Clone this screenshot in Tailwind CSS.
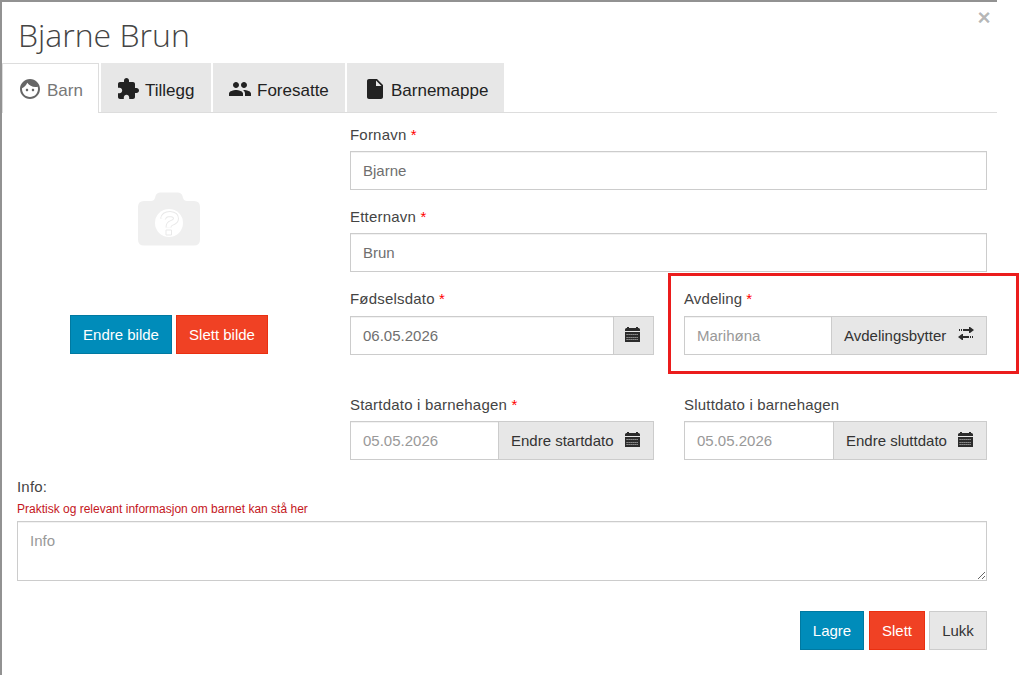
<!DOCTYPE html>
<html lang="no">
<head>
  <meta charset="UTF-8" />
  <meta name="viewport" content="width=device-width, initial-scale=1.0"/>
  <title>Bjarne Brun</title>
  <script src="https://cdn.jsdelivr.net/npm/@tailwindcss/browser@4"></script>
</head>
<body class="bg-white overflow-hidden font-['Liberation_Sans',Arial,sans-serif] text-[15px] leading-[21px] text-[#444]">

  <!-- Shared icons -->
  <svg class="hidden">
    <symbol id="calendar" viewBox="0 0 15 16">
      <path fill="#2b2b2b" d="M0 2.500Q0 1 1.500 1H2V0h2v1h7V0h2v1h.5Q15 1 15 2.500V4H0zM0 5h15v10H0z"/>
      <path stroke="#b5b5b5" stroke-width="1" stroke-dasharray="1.200 .8" d="M1.500 7.500h12M1.500 10.500h12M1.500 12.500h12"/>
    </symbol>
  </svg>

  <div class="relative w-[1019px] h-[675px] border-l-2 border-[#929292]">

    <!-- Header -->
    <header class="flex justify-between w-[995px] h-[63px] border-t-2 border-[#929292] pl-4 pr-1.5">
      <h1 class="font-['Open_Sans'] font-light text-[32px] leading-[44px] pt-[11px] text-[#444]">Bjarne Brun</h1>
      <button class="self-start w-[14px] mt-[5px] text-[22.5px] leading-[22px] font-bold text-black/30">×</button>
    </header>

    <!-- Tabs -->
    <nav class="flex gap-0.5 w-[995px] h-[50px] border-b border-[#ddd] text-[17px] leading-[24px] text-[#222]">
      <button class="flex items-center w-[97px] h-[50px] pl-[15px] pt-1 bg-white border border-b-0 border-[#ddd] text-[#777]">
        <svg class="size-6 -mt-1 shrink-0" viewBox="0 0 24 24" fill="#666"><path d="M9 11.750c-.69 0-1.250.56-1.250 1.250s.56 1.250 1.250 1.250 1.250-.56 1.250-1.250-.56-1.250-1.250-1.250zm6 0c-.69 0-1.250.56-1.250 1.250s.56 1.250 1.250 1.250 1.250-.56 1.250-1.250-.56-1.250-1.250-1.250zM12 2C6.480 2 2 6.480 2 12s4.480 10 10 10 10-4.480 10-10S17.520 2 12 2zm0 18c-4.410 0-8-3.590-8-8 0-.29.020-.58.050-.86 2.360-1.050 4.230-2.980 5.210-5.370C11.070 8.330 14.050 10 17.420 10c.78 0 1.530-.09 2.250-.26.21.71.33 1.470.33 2.260 0 4.410-3.590 8-8 8z"/></svg>
        <span class="ml-[5px]">Barn</span>
      </button>
      <button class="flex items-center w-[110px] h-[49px] pl-[15px] pt-1.5 bg-[#e7e7e7]">
        <svg class="size-6 -mt-1 shrink-0" viewBox="0 0 24 24" fill="#222"><path d="M20.500 11H19V7c0-1.100-.9-2-2-2h-4V3.500C13 2.120 11.880 1 10.500 1S8 2.120 8 3.500V5H4c-1.100 0-1.990.9-1.990 2v3.800H3.500c1.490 0 2.700 1.210 2.700 2.700s-1.210 2.700-2.700 2.700H2V20c0 1.100.9 2 2 2h3.800v-1.500c0-1.490 1.210-2.700 2.700-2.700 1.490 0 2.700 1.210 2.700 2.700V22H17c1.100 0 2-.9 2-2v-4h1.500c1.380 0 2.500-1.120 2.500-2.500S21.880 11 20.500 11z"/></svg>
        <span class="ml-[5px]">Tillegg</span>
      </button>
      <button class="flex items-center w-[132px] h-[49px] pl-[15px] pt-1.5 bg-[#e7e7e7]">
        <svg class="size-6 -mt-1 shrink-0" viewBox="0 0 24 24" fill="#222"><path d="M16 11c1.660 0 2.990-1.340 2.990-3S17.660 5 16 5c-1.660 0-3 1.340-3 3s1.340 3 3 3zm-8 0c1.660 0 2.990-1.340 2.990-3S9.660 5 8 5C6.340 5 5 6.340 5 8s1.340 3 3 3zm0 2c-2.330 0-7 1.170-7 3.500V19h14v-2.500c0-2.330-4.670-3.500-7-3.500zm8 0c-.29 0-.62.020-.97.050 1.160.84 1.970 1.970 1.970 3.450V19h6v-2.500c0-2.330-4.670-3.500-7-3.500z"/></svg>
        <span class="ml-[5px]">Foresatte</span>
      </button>
      <button class="flex items-center w-[157px] h-[49px] pl-4 pt-1.5 bg-[#e7e7e7]">
        <svg class="size-6 -mt-1 shrink-0" viewBox="0 0 24 24" fill="#222"><path d="M6 2c-1.100 0-1.990.9-1.990 2L4 20c0 1.100.89 2 1.990 2H18c1.100 0 2-.9 2-2V8l-6-6H6zm7 7V3.500L18.500 9H13z"/></svg>
        <span class="ml-1">Barnemappe</span>
      </button>
    </nav>

    <!-- Form -->
    <main class="flex w-[985px] h-[347px]">
      <!-- Picture -->
      <div class="w-[348px] pt-[78px]">
        <svg class="ml-[135px] w-[64px] h-[56px]" viewBox="0 0 64 56">
          <path fill="#efefef" d="M1 16Q1 10 7 10h7q3 0 4-3l.5-2q1-3.500 5-3.500h17q4 0 5 3.500l.5 2q1 3 4 3h7q6 0 6 6v32.500q0 6-6 6H7q-6 0-6-6z"/>
          <circle cx="32" cy="32" r="14" fill="#fff"/>
          <path fill="none" stroke="#e9e9e9" stroke-width="6" d="M26 28q1-5 7-5 6 .5 6 4.500 0 3-4.500 4.500-3 1-3 4.500"/>
          <path fill="none" stroke="#fff" stroke-width="4" d="M26 28q1-5 7-5 6 .5 6 4.500 0 3-4.500 4.500-3 1-3 4.500"/>
          <path fill="#fff" stroke="#e9e9e9" d="M29 39h5.500v5H29z"/>
        </svg>
        <div class="flex gap-1 mt-[68px] ml-[68px] text-white">
          <button class="w-[102px] h-[39px] bg-[#008cba] border border-[#0079a1]">Endre bilde</button>
          <button class="w-[92px] h-[39px] bg-[#f04124] border border-[#ea2f10]">Slett bilde</button>
        </div>
      </div>

      <!-- Fields -->
      <div class="w-[637px] pt-[11px]">
        <label class="block tracking-[0.2px]">Fornavn <span class="text-[#f00]">*</span></label>
        <div class="flex items-center mt-1.5 h-[39px] px-3 border border-[#ccc] text-[#6f6f6f] inset-shadow-2xs">Bjarne</div>
        <label class="block mt-4 tracking-[0.2px]">Etternavn <span class="text-[#f00]">*</span></label>
        <div class="flex items-center mt-1.5 h-[39px] px-3 border border-[#ccc] text-[#6f6f6f] inset-shadow-2xs">Brun</div>

        <div class="grid grid-cols-[304px_303px] gap-x-[30px] mt-4">
          <div>
            <label class="block tracking-[0.2px]">Fødselsdato <span class="text-[#f00]">*</span></label>
            <div class="flex mt-[7px] h-[39px] border border-[#ccc]">
              <div class="flex items-center flex-1 px-3 text-[#6f6f6f] inset-shadow-2xs">06.05.2026</div>
              <button class="w-[40px] pl-[11px] border-l border-[#ccc] bg-[#e7e7e7]"><svg class="w-[15px] h-4 -mt-0.5"><use href="#calendar"/></svg></button>
            </div>
          </div>
          <div>
            <label class="block tracking-[0.1px]">Avdeling <span class="text-[#f00]">*</span></label>
            <div class="flex mt-[7px] h-[39px] border border-[#ccc]">
              <div class="flex items-center flex-1 pl-3 text-[#999] inset-shadow-2xs">Marihøna</div>
              <button class="flex items-center justify-between w-[155px] pl-3 pr-3 border-l border-[#ccc] bg-[#e7e7e7] text-[#333]">Avdelingsbytter
                <svg class="w-4 h-[13px] -mt-1" viewBox="0 0 16 13" fill="#2b2b2b"><path d="M1 2h1v2H1zM3 2h1v2H3zM5 2h6V0h1l4 3-4 3h-1V4H5zM15 9h-1v2h1zM13 9h-1v2h1zM11 11H5v2H4L0 10l4-3h1v2h6z"/></svg>
              </button>
            </div>
          </div>
        </div>

        <div class="grid grid-cols-[304px_303px] gap-x-[30px] mt-[39px]">
          <div>
            <label class="block tracking-[0.2px]">Startdato i barnehagen <span class="text-[#f00]">*</span></label>
            <div class="flex mt-1.5 h-[39px] border border-[#ccc]">
              <div class="flex items-center flex-1 px-3 text-[#999] inset-shadow-2xs">05.05.2026</div>
              <button class="flex items-center justify-between w-[155px] pl-3 pr-[13px] border-l border-[#ccc] bg-[#e7e7e7] text-[#333]">Endre startdato <svg class="w-[15px] h-4 -mt-0.5"><use href="#calendar"/></svg></button>
            </div>
          </div>
          <div>
            <label class="block tracking-[0.2px]">Sluttdato i barnehagen</label>
            <div class="flex mt-1.5 h-[39px] border border-[#ccc]">
              <div class="flex items-center flex-1 pl-3 text-[#999] inset-shadow-2xs">05.05.2026</div>
              <button class="flex items-center justify-between w-[153px] pl-3 pr-[13px] border-l border-[#ccc] bg-[#e7e7e7] text-[#333]">Endre sluttdato <svg class="w-[15px] h-4 -mt-0.5"><use href="#calendar"/></svg></button>
            </div>
          </div>
        </div>
      </div>
    </main>

    <!-- Info -->
    <section class="ml-[15px] w-[970px] pt-4">
      <label class="block tracking-[0.2px]">Info:</label>
      <p class="text-[12px] leading-[17px] mt-1 text-[#c4161c]">Praktisk og relevant informasjon om barnet kan stå her</p>
      <textarea class="block mt-[3px] w-full h-[60px] px-3 py-2 border border-[#ccc] resize-y inset-shadow-2xs placeholder:text-[#999]" placeholder="Info"></textarea>
    </section>

    <!-- Buttons -->
    <footer class="flex justify-end w-[985px] mt-[30px] text-white">
      <button class="w-[64px] h-[39px] bg-[#008cba] border border-[#0079a1]">Lagre</button>
      <button class="w-[56px] h-[39px] ml-[5px] bg-[#f04124] border border-[#ea2f10]">Slett</button>
      <button class="w-[58px] h-[39px] ml-1 bg-[#e7e7e7] border border-[#ccc] text-[#333]">Lukk</button>
    </footer>

    <!-- Highlight around Avdeling -->
    <div class="absolute left-[666px] top-[273px] w-[351px] h-[101px] border-3 border-[#eb1c1c]"></div>
  </div>
</body>
</html>
